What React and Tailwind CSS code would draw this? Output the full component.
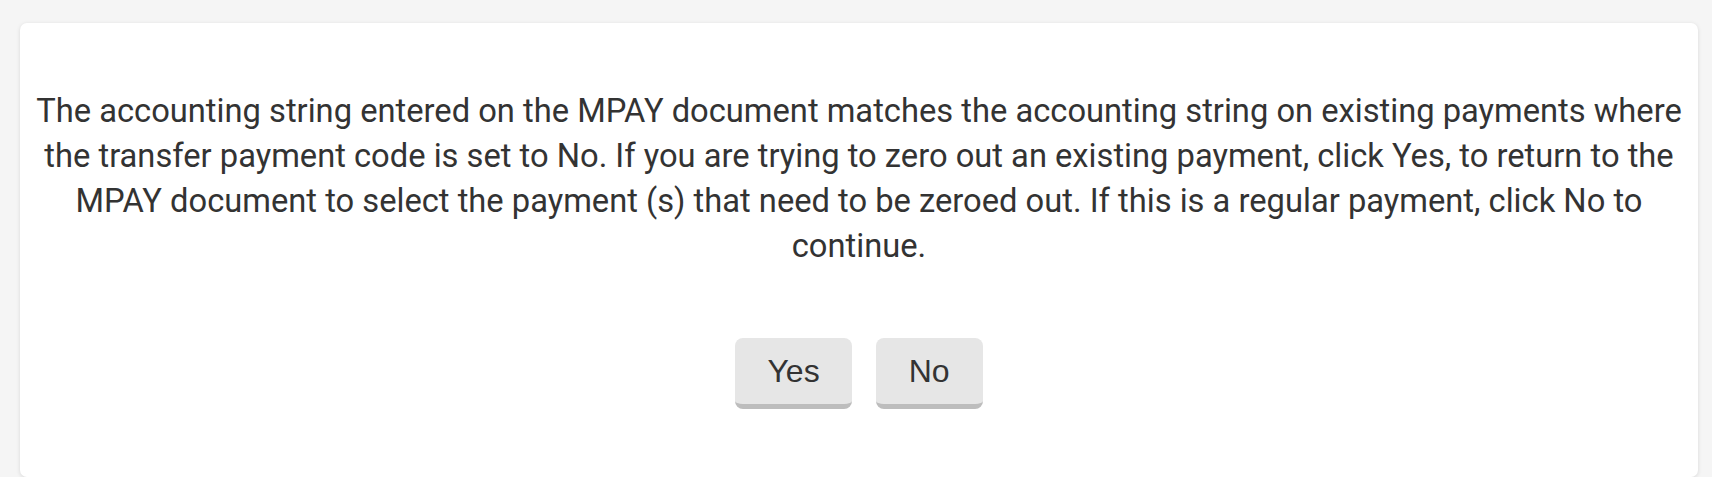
export default function App() {
  return (
    <div className="min-h-screen bg-[#f5f5f5] pt-[23px] pl-[20px] pr-[14px]">
      <div
        className="bg-white rounded-[7px] shadow-[0_1px_4px_rgba(0,0,0,0.12)] px-[14px] pt-[66px] pb-[68px] flex flex-col items-center"
        style={{ fontFamily: "Roboto, 'Noto Sans', sans-serif" }}
      >
        <p className="text-center text-[32.7px] leading-[45px] text-[#333333]">
          The accounting string entered on the MPAY document matches the accounting string on existing payments where
          the transfer payment code is set to No. If you are trying to zero out an existing payment, click Yes, to return to the
          MPAY document to select the payment (s) that need to be zeroed out. If this is a regular payment, click No to
          continue.
        </p>
        <div className="mt-[69px] flex gap-[24px]">
          <button
            className="h-[71px] px-[32px] bg-[#e6e6e6] rounded-[8px] border-b-[5px] border-[#bdbdbd] text-[32px] text-[#333333]"
            style={{ fontFamily: "'Liberation Sans', Arial, sans-serif" }}
          >
            Yes
          </button>
          <button
            className="h-[71px] px-[33px] bg-[#e6e6e6] rounded-[8px] border-b-[5px] border-[#bdbdbd] text-[32px] text-[#333333]"
            style={{ fontFamily: "'Liberation Sans', Arial, sans-serif" }}
          >
            No
          </button>
        </div>
      </div>
    </div>
  );
}
